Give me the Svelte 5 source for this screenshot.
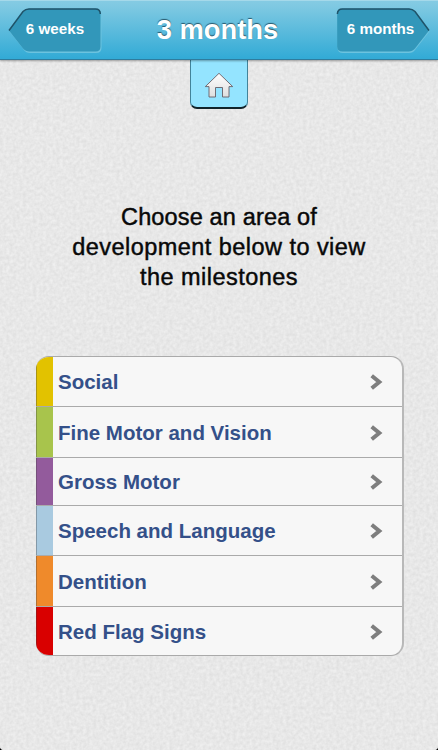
<script lang="ts">
  type Area = { label: string; color: string; height: number };

  const areas: Area[] = [
    { label: "Social", color: "#e2c200", height: 50 },
    { label: "Fine Motor and Vision", color: "#a8c44c", height: 51 },
    { label: "Gross Motor", color: "#935b9c", height: 48 },
    { label: "Speech and Language", color: "#a9cae0", height: 50 },
    { label: "Dentition", color: "#ef8a2b", height: 51 },
    { label: "Red Flag Signs", color: "#d90000", height: 48 },
  ];
</script>

<div class="screen">
  <svg class="paper" width="438" height="750" aria-hidden="true">
    <filter id="grain" x="0" y="0" width="100%" height="100%" color-interpolation-filters="sRGB">
      <feTurbulence type="fractalNoise" baseFrequency="0.3" numOctaves="2" seed="4" />
      <feColorMatrix
        values="0.09 0 0 0 0.863
                0.09 0 0 0 0.863
                0.09 0 0 0 0.863
                0 0 0 0 1"
      />
    </filter>
    <rect width="438" height="750" filter="url(#grain)" />
  </svg>

  <header>
    <button class="nav prev">
      <svg width="96" height="48" viewBox="0 0 96 48" aria-hidden="true">
        <path class="lip" d="M1.5 23.5 15 4.5Q17.5 1.5 21 1.5H88Q93.5 1.5 93.5 7V40Q93.5 45 88 45H22Q18 45 16 42Z" />
        <path class="face" d="M1 22.5 15 3.5Q17.5.7 21 .7H87.5Q92.5.7 92.5 6V38.5Q92.5 43.5 87.5 43.5H21.5Q17.5 43.5 15 40.5Z" />
        <path class="edge" d="M1 22.5 15 3.5Q17.5.9 21 .9H87.5Q92.3.9 92.3 6" />
      </svg>
      <span>6 weeks</span>
    </button>
    <h1>3 months</h1>
    <button class="nav next">
      <svg width="96" height="48" viewBox="0 0 96 48" aria-hidden="true">
        <path class="lip" d="M93.5 23.5 80 4.5Q77.5 1.5 74 1.5H7Q1.5 1.5 1.5 7V40Q1.5 45 7 45H73Q77 45 79 42Z" />
        <path class="face" d="M93 22.5 79 3.5Q76.5.7 73 .7H6.5Q1.2.7 1.2 6V38.5Q1.2 43.5 6.5 43.5H72.5Q76.5 43.5 79 40.5Z" />
        <path class="edge" d="M1.4 6Q1.4.9 6.5.9H73Q76.5.9 79 3.5L93 22.5" />
      </svg>
      <span>6 months</span>
    </button>
  </header>

  <button class="home" aria-label="Home">
    <svg width="30" height="27" viewBox="0 0 30 27">
      <defs>
        <linearGradient id="roof" x1="0" y1="0" x2="0" y2="1">
          <stop offset="0" stop-color="#ffffff" />
          <stop offset="1" stop-color="#dedede" />
        </linearGradient>
      </defs>
      <path d="M15 1.3 28.7 14.6H25V25H18.5V15.5H11.5V25H5V14.6H1.3Z" fill="url(#roof)" stroke="#665f66" stroke-width="0.9" stroke-linejoin="round" />
    </svg>
  </button>

  <p class="intro">
    <span class="tight">Choose an area of</span><br />
    development below to view<br />
    the milestones
  </p>

  <ul class="areas">
    {#each areas as area}
      <li style="height: {area.height}px">
        <span class="swatch" style="background-color: {area.color}"></span>
        <span class="label">{area.label}</span>
        <svg class="chevron" width="13" height="16" viewBox="0 0 13 16" aria-hidden="true">
          <path d="M1.7 1.8 9.3 8 1.7 14.2" />
        </svg>
      </li>
    {/each}
  </ul>
</div>

<style>
  :global(body) { background: #000; }

  .screen {
    position: relative;
    display: flex;
    flex-direction: column;
    width: 438px;
    height: 750px;
    overflow: hidden;
    border-radius: 0 0 4px 4px;
    background: #e8e8e8;
    font-family: "Liberation Sans", Arial, sans-serif;
  }
  .paper {
    position: absolute;
    inset: 0;
  }
  header, .home, .intro, .areas { position: relative; }

  header {
    z-index: 1;
    box-sizing: border-box;
    display: flex;
    justify-content: space-between;
    height: 60px;
    padding: 8px 8px 0;
    background: linear-gradient(#86cbe3, #7fc9e2 6px, #33abd6 58px);
    border-bottom: 1px solid #2f7c9d;
    box-shadow: inset 0 1px #a5d9ea, 0 1px 2px rgba(0, 0, 0, 0.35);
  }
  h1 {
    margin: 0 3px 0 0;
    font-size: 27.3px;
    line-height: 44px;
    color: #fff;
    text-shadow: 0 -1px 1px #28576b;
  }
  button {
    padding: 0;
    border: 0;
    background: none;
    font: inherit;
  }
  .nav {
    display: grid;
    width: 94px;
    height: 48px;
    font-size: 15.2px;
    font-weight: bold;
    color: #fff;
  }
  .nav svg, .nav span { grid-area: 1 / 1; }
  .nav span {
    z-index: 1;
    padding-right: 2px;
    line-height: 42px;
    white-space: nowrap;
  }
  .next span { padding-right: 7px; }
  .lip { fill: #6cc3df; }
  .face { fill: #3297ba; }
  .edge { fill: none; stroke: #1f5369; stroke-width: 1.5; }

  .home {
    box-sizing: border-box;
    display: flex;
    justify-content: center;
    align-self: center;
    width: 58px;
    height: 49px;
    padding-top: 12px;
    border: 1px solid #42839a;
    border-top: 0;
    border-bottom: 2px solid #10242b;
    border-radius: 0 0 7px 7px;
    background: #94e4ff;
  }

  .intro {
    margin: 93px 0 0;
    font-size: 23.5px;
    line-height: 30px;
    letter-spacing: 0.45px;
    text-align: center;
    color: #080808;
    -webkit-text-stroke: 0.45px #080808;
  }
  .tight { letter-spacing: 0.15px; }

  .areas {
    box-sizing: border-box;
    width: 368px;
    margin: 64px 0 0 36px;
    padding: 0;
    overflow: hidden;
    list-style: none;
    border: 1px solid #aaa;
    border-right: 2px solid #b8b8b8;
    border-left: 0;
    border-radius: 13px;
    background: #f7f7f7;
  }
  li {
    box-sizing: border-box;
    display: flex;
    align-items: center;
    border-bottom: 1px solid #aaa;
  }
  li:last-child { border-bottom: 0; }
  .swatch {
    width: 17px;
    height: 100%;
    box-shadow: inset 1px 0 rgba(60, 60, 60, 0.35);
  }
  .label {
    flex: 1;
    padding: 1px 0 0 5px;
    font-size: 20.5px;
    font-weight: bold;
    color: #345089;
  }
  .chevron {
    margin: 1px 19px 0 0;
  }
  .chevron path {
    fill: none;
    stroke: #7e7e7e;
    stroke-width: 4;
  }
</style>
